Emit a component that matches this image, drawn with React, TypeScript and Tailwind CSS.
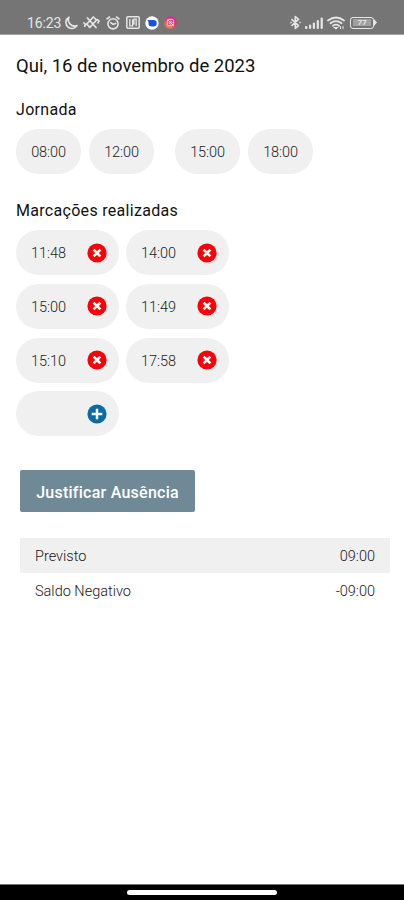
import React from "react";

function StatusBar() {
  return (
    <header className="flex h-[35px] items-end border-b border-[#a3a3a3] bg-[#757575] pl-[27px] pr-[27px] text-[#e6e6e6]">
      <div className="flex h-[23px] flex-1 items-center">
        <span className="w-[35px] text-[14px] leading-6 tracking-[-0.1px]">16:23</span>
        <svg className="ml-[2px] h-[14px] w-[14px]" viewBox="0 0 14 14" fill="none" stroke="currentColor" strokeWidth="1.6" strokeLinejoin="round">
          <path d="M5 1.2A6 6 0 1 0 13 9.6 6.2 6.2 0 0 1 5 1.2Z" />
        </svg>
        <svg className="ml-[5px] h-[15px] w-[17px]" viewBox="0 0 17 15" fill="none" stroke="currentColor" strokeWidth="1.7" strokeLinejoin="round" strokeLinecap="round">
          <path d="M3.8 9 10.3 2l3.2 3-6.7 7.5ZM1 8l1.6 1.6-1 1.6M14.4 4.6l1.6 1.5-1 1.8M4.5 3l8.5 9.5" />
        </svg>
        <svg className="ml-[6px] h-[14px] w-[14px]" viewBox="0 0 14 14" fill="none" stroke="currentColor" strokeWidth="1.6" strokeLinecap="round">
          <circle cx="7" cy="7.8" r="5.1" />
          <path d="M1 2.8 3.5 1M13 2.8 10.5 1M4.8 6.7 7 8.4l2.5-1" />
        </svg>
        <svg className="ml-[6px] h-[13px] w-[14px]" viewBox="0 0 14 13" fill="none" stroke="currentColor" strokeWidth="1.5">
          <rect x=".8" y=".8" width="12.4" height="11.4" rx="1" />
          <path d="M3.8 3v6.8h2.8V3.2M10.2 10V3.2H8v5.6" strokeWidth="1.3" />
        </svg>
        <svg className="ml-[5px] h-[14px] w-[14px]" viewBox="0 0 14 14">
          <circle cx="7" cy="7" r="6.7" fill="#fff" />
          <path d="M2.3 4h6.2a3.2 3.2 0 0 1 0 6.4H6.7A3.2 3.2 0 0 1 3.5 7.2V5.8Z" fill="#1455d9" />
        </svg>
        <svg className="ml-[5px] h-[13px] w-[13px]" viewBox="0 0 13 13">
          <defs>
            <linearGradient id="camera" x1=".2" y1="1" x2=".8" y2="0">
              <stop offset="0" stopColor="#ff9b3d" />
              <stop offset=".5" stopColor="#ee3264" />
              <stop offset="1" stopColor="#c12bb4" />
            </linearGradient>
          </defs>
          <circle cx="6.5" cy="6.5" r="6.2" fill="url(#camera)" />
          <g fill="none" stroke="#ffd0dc" strokeWidth="1">
            <rect x="3.3" y="3.3" width="6.4" height="6.4" rx="1.5" />
            <circle cx="6.5" cy="6.5" r="1.5" />
            <path d="m3.5 3.5 6 6" />
          </g>
        </svg>
      </div>
      <div className="flex h-[23px] items-center">
        <svg className="h-[15px] w-[11px]" viewBox="0 0 11 15" fill="none" stroke="currentColor" strokeWidth="1.6" strokeLinejoin="round">
          <path d="m1.5 4.2 7 6.4L5.3 13.5V1.5l3.2 2.9-7 6.4" />
          <path d="M.3 7.5h1.4M9.3 7.5h1.4" />
        </svg>
        <svg className="ml-[4px] h-[12px] w-[18px]" viewBox="0 0 18 12" fill="currentColor">
          <rect x="0" y="9" width="2.4" height="3" rx="1" />
          <rect x="4" y="7.5" width="2.2" height="4.5" rx="1" />
          <rect x="7.8" y="5.5" width="2.2" height="6.5" rx="1" />
          <rect x="11.7" y="3" width="2.2" height="9" rx="1" />
          <rect x="15.6" y=".5" width="2.2" height="11.5" rx="1" />
        </svg>
        <svg className="ml-[4px] h-[14px] w-[18px]" viewBox="0 0 18 14" fill="none" stroke="currentColor" strokeWidth="1.8" strokeLinecap="round">
          <path d="M1 4.5Q9-1.5 17 4.5M3.5 7.2Q9 3 14.5 7.2M6 9.8Q9 7.5 12 9.8" />
          <path d="m7.5 11.5 1.5 1.3 1.5-1.3ZM13.5 10.5v2M16 10.5v2" strokeWidth="1.1" />
        </svg>
        <div className="ml-[5px] flex items-center">
          <div className="flex h-[12px] w-[24px] items-center justify-center rounded-[3px] border border-[#e6e6e6]">
            <span className="flex h-[7px] w-[18px] items-center justify-center bg-[#a0a0a0] text-[8px] leading-none font-bold">77</span>
          </div>
          <svg className="h-[7px] w-[3px]" viewBox="0 0 3 7" fill="currentColor"><path d="M0 0 3 3.5 0 7Z" /></svg>
        </div>
      </div>
    </header>
  );
}

function ShiftTime({ time }: { time: string }) {
  return (
    <div className="flex h-[45px] w-[65px] items-center justify-center rounded-[22px] bg-[#f0f0f0] pt-[2px] text-[14.5px] font-light tracking-[-0.1px] text-[#222]">
      {time}
    </div>
  );
}

function Punch({ time }: { time?: string }) {
  return (
    <div className="flex h-[45px] w-[103px] items-center justify-between rounded-[23px] bg-[#f0f0f0] pr-[12px] pl-[15px] text-[14.5px] font-light tracking-[-0.05px] text-[#1c1c1c]">
      <span className="pt-[3px]">{time}</span>
      <button aria-label={time ? "Remover" : "Adicionar"}>
        <svg className="h-[20px] w-[20px]" viewBox="0 0 20 20" stroke="#fff" strokeWidth="2.7">
          <circle cx="10" cy="10" r="9.6" fill={time ? "#fb0009" : "#0b6ca5"} stroke="none" />
          {time ? <path d="m6.6 6.6 6.8 6.8m0-6.8-6.8 6.8" /> : <path d="M10 4.7v10.6M4.7 10h10.6" strokeWidth="2.4" />}
        </svg>
      </button>
    </div>
  );
}

export default function App() {
  return (
    <div className="flex h-[900px] w-[404px] flex-col bg-white font-['Roboto',sans-serif] text-[#111]">
      <StatusBar />
      <main className="flex-1">
        <h1 className="mt-[18px] pl-[16px] text-[18.5px] leading-[26px] tracking-[0px]">Qui, 16 de novembro de 2023</h1>
        <h2 className="mt-[19px] pl-[16px] text-[16px] leading-[24px] tracking-[0.3px]">Jornada</h2>
        <div className="mt-[7px] flex gap-[21px] pl-[16px]">
          <div className="flex gap-[8px]">
            <ShiftTime time="08:00" />
            <ShiftTime time="12:00" />
          </div>
          <div className="flex gap-[8px]">
            <ShiftTime time="15:00" />
            <ShiftTime time="18:00" />
          </div>
        </div>
        <h2 className="mt-[25px] pl-[16px] text-[16px] leading-[24px] tracking-[0.3px]">Marcações realizadas</h2>
        <div className="mt-[7px] grid w-fit grid-cols-2 gap-x-[7px] gap-y-[8.8px] pl-[16px]">
          <Punch time="11:48" />
          <Punch time="14:00" />
          <Punch time="15:00" />
          <Punch time="11:49" />
          <Punch time="15:10" />
          <Punch time="17:58" />
          <Punch />
        </div>
        <button className="mt-[34px] ml-[20px] flex h-[42px] w-[175px] items-center justify-center rounded-[2px] bg-[#6f8a96] pt-[3px] text-[16px] font-medium tracking-[0.25px] text-white">
          Justificar Ausência
        </button>
        <div className="mt-[26px] ml-[20px] w-[370px] text-[14.5px] font-light text-[#181818]">
          <div className="flex h-[35px] items-center justify-between bg-[#f0f0f0] pt-[2px] pr-[15px] pl-[15px]">
            <span>Previsto</span>
            <span>09:00</span>
          </div>
          <div className="flex h-[35px] items-center justify-between pt-[2px] pr-[15px] pl-[15px]">
            <span>Saldo Negativo</span>
            <span>-09:00</span>
          </div>
        </div>
      </main>
      <footer className="flex h-[16px] items-center justify-center border-t border-[#777] bg-black">
        <div className="h-[5px] w-[150px] rounded-full bg-white" />
      </footer>
    </div>
  );
}
